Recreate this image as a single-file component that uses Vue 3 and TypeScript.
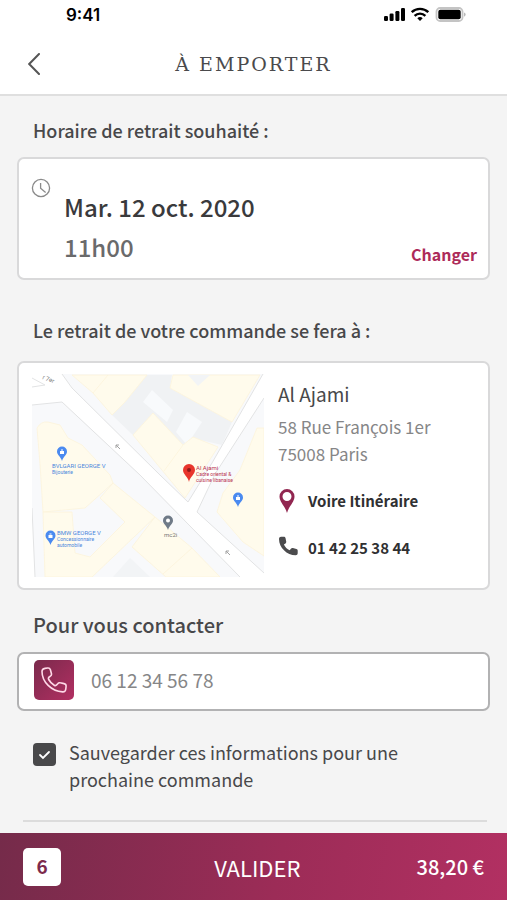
<script setup lang="ts">
import { ref } from 'vue'

interface Place {
  name: string
  street: string
  city: string
  phone: string
}

const place: Place = {
  name: 'Al Ajami',
  street: '58 Rue François 1er',
  city: '75008 Paris',
  phone: '01 42 25 38 44',
}
const pickup = { day: 'Mar. 12 oct. 2020', hour: '11h00' }
const phone = ref<string>('')
const save = ref<boolean>(true)
const cart = { count: 6, total: '38,20 €' }
</script>

<template>
  <div class="screen">
    <div class="status">
      <span class="time">9:41</span>
      <svg class="indicators" viewBox="0 0 84 16" aria-hidden="true">
        <g fill="#000">
          <rect x="1" y="9" width="4" height="5" rx="1.2" />
          <rect x="6.600" y="6.600" width="4" height="7.400" rx="1.200" />
          <rect x="12.400" y="4" width="4" height="10" rx="1.200" />
          <rect x="18" y="1" width="4" height="13" rx="1.200" />
          <path d="M37 14 34.300 11.200a4 4 0 0 1 5.400 0z" />
        </g>
        <g fill="none" stroke="#000" stroke-width="2.400">
          <path d="M28.700 5.200a12 12 0 0 1 16.600 0" />
          <path d="M31.600 8.800a7.800 7.800 0 0 1 10.800 0" />
        </g>
        <rect x="53.500" y="1" width="26" height="13" rx="3.600" fill="#fff" stroke="#c4c4c4" stroke-width="1.800" />
        <rect x="55.300" y="2.800" width="22.400" height="9.400" rx="2" fill="#000" />
        <path d="M81.200 5.600v4.200c1.800-.7 1.800-3.500 0-4.200z" fill="#aaa" />
      </svg>
    </div>

    <header class="topbar">
      <button class="back" type="button" aria-label="Retour">
        <svg viewBox="0 0 12 22"><path d="M11 1 1.200 11 11 21" /></svg>
      </button>
      <h1>À EMPORTER</h1>
    </header>

    <main>
      <section>
        <h2 class="tight">Horaire de retrait souhaité :</h2>
        <div class="card schedule">
          <svg class="clock" viewBox="0 0 20 20" aria-hidden="true">
            <circle cx="10" cy="10" r="8.600" />
            <path d="M9.600 5v5.200l5 4.400" />
          </svg>
          <div class="slot">
            <p class="day">{{ pickup.day }}</p>
            <p class="hour">{{ pickup.hour }}</p>
          </div>
          <button class="change" type="button">Changer</button>
        </div>
      </section>

      <section class="where">
        <h2 class="tight">Le retrait de votre commande se fera à :</h2>
        <div class="card place">
          <svg class="map" viewBox="0 0 232 203" role="img" aria-label="Plan du quartier">
            <rect width="232" height="203" fill="#fff" />
            <g fill="#f8f9fb">
              <path d="M30 0 40 14 128 101 156 128 180 89 231 0z" />
              <path d="M0 31 30 28 108 101 208 203H3L0 134z" />
              <path d="M232 24 183 100 165 138 232 199z" />
            </g>
            <g fill="none" stroke="#e2e3e4">
              <path d="M30 0 40 14 128 101 156 128 180 89 231 0" />
              <path d="M0 31 30 28 108 101 208 203" />
              <path d="M0 134 3 203" />
              <path d="M232 24 183 100 165 138 232 199" />
              <path d="M0 4 13 11 0 13" />
            </g>
            <path d="M115 1H140L138 14 200 48 190 71 160 64 151 71 121 39 101 61 80 41 93 28z" fill="#f0f2f4" />
            <g fill="#f8fafc">
              <path d="M120 16 141 36 135 48 111 28z" />
              <path d="M155 38 170 48 155 71 144 58z" />
            </g>
            <g fill="#fffbec" stroke="#fcf4db" stroke-width=".8">
              <path d="M40 1H115L93 28 80 41 61 19z" />
              <path d="M61 19 76 1" />
              <path d="M141 1H228L200 48 138 14z" />
              <path d="M121 39 151 71 161 63 186 73 153 124 101 61z" />
              <path d="M151 71 132 97" />
              <path d="M5 54Q9 47 16 48L28 51 36 64 50 71 78 101 81 109 53 134 11 138 8 90z" />
              <path d="M11 138H40L43 179 58 183 93 148 68 124 81 109 123 143 60 203H13z" />
              <path d="M123 143 160 174 188 203H134L100 173z" />
              <path d="M131 200 160 174" />
              <path d="M232 54H225L208 96 191 119 185 138 211 168 232 182z" />
            </g>
            <g fill="#f2f4f6">
              <path d="M156 1H178L166 12z" />
              <path d="M81 203 98 184 118 203z" />
            </g>
            <g stroke="#a2a2a2" fill="none">
              <path d="M84 71 88 75M84 71V74M84 71H87" />
              <path d="M194 177 198 181M194 177V180M194 177H197" />
            </g>
            <text class="road name" transform="translate(10 5) rotate(20)">r 7er</text>
            <g fill="#4a8af0">
              <path d="M30 87c-1.500-5-5-6-5-9.500a5 5 0 0 1 10 0c0 3.500-3.500 4.500-5 9.500z" />
              <path d="M18.500 171c-1.500-5-5-6-5-9.500a5 5 0 0 1 10 0c0 3.500-3.500 4.500-5 9.500z" />
              <path d="M206 133c-1.500-5-5-6-5-9.500a5 5 0 0 1 10 0c0 3.500-3.500 4.500-5 9.500z" />
            </g>
            <g fill="#fff">
              <path d="M28 77h4v3h-4zM29 75.500h2v1h-2z" />
              <path d="M16.500 161h4v3h-4zM17.500 159.500h2v1h-2z" />
              <path d="M204 123h4v3h-4zM205 121.500h2v1h-2z" />
            </g>
            <path d="M136 156c-1.500-5-5-6-5-9.500a5 5 0 0 1 10 0c0 3.500-3.500 4.500-5 9.500z" fill="#6f7a87" />
            <circle cx="136" cy="146.500" r="2" fill="#fff" />
            <path d="M157 108c-1-5.500-6-7.500-6-12a6 6 0 0 1 12 0c0 4.500-5 6.500-6 12z" fill="#e8352c" />
            <circle cx="157" cy="96" r="2" fill="#8f1a1a" />
            <g class="blue">
              <text class="name" x="20" y="94">BVLGARI GEORGE V</text>
              <text x="20" y="100">Bijouterie</text>
              <text class="name" x="25" y="161">BMW GEORGE V</text>
              <text x="25" y="167">Concessionnaire</text>
              <text x="25" y="173">automobile</text>
            </g>
            <g class="red">
              <text class="name" x="164" y="96">Al Ajami</text>
              <text x="164" y="102">Cadre oriental &amp;</text>
              <text x="164" y="108">cuisine libanaise</text>
            </g>
            <text class="name grey" x="132" y="163">mc2i</text>
          </svg>
          <div class="details">
            <h3>{{ place.name }}</h3>
            <address>{{ place.street }}<br />{{ place.city }}</address>
            <a class="action" href="#itineraire">
              <svg viewBox="0 0 20 26" aria-hidden="true">
                <path fill="#912650" fill-rule="evenodd" d="M9 25C7 18 1.500 14 1.500 8.500a7.500 7.500 0 0 1 15 0C16.500 14 11 18 9 25zM9 4a4.500 4.500 0 1 0 0 9 4.500 4.500 0 0 0 0-9z" />
              </svg>
              Voire Itinéraire
            </a>
            <a class="action" href="tel:0142253844">
              <svg viewBox="0 0 20 26" aria-hidden="true">
                <path fill="#4b4b4d" d="M1 4C1 2.500 2 1.800 3 1.800h2.700c.9 0 1.600.5 1.800 1.300l.7 3.500c.2.800-.1 1.400-.7 1.800L5.900 9.600c1.200 2.600 3.200 4.500 5.800 5.700l1.400-1.700c.5-.5 1.100-.7 1.800-.5l3.500.9c.8.200 1.300.8 1.300 1.700v2.600c0 1.200-.9 2-2 2C8.900 20.300 1 12.500 1 4z" />
              </svg>
              {{ place.phone }}
            </a>
          </div>
        </div>
      </section>

      <section class="contact">
        <h2><label for="phone">Pour vous contacter</label></h2>
        <div class="card field">
          <span class="badge">
            <svg viewBox="0 0 26 26" aria-hidden="true">
              <path d="M1 4.500C1 2.500 2 1.800 4 1.400L6.500 1C8 .8 9 1.400 9.400 2.800l1 3.700c.3 1.200 0 2-1 2.600l-1.200.9c-.9.700-1 1.500-.5 2.500 1.300 2.400 3 4.300 5.500 5.700 1 .6 1.900.5 2.600-.4l.9-1.100c.7-.9 1.500-1.200 2.600-.9l3.700.8c1.500.3 2.200 1.200 2.100 2.700l-.3 2.700c-.2 2-1.200 3-3.200 2.900C10.500 24.300 1 15 1 4.500z" />
            </svg>
          </span>
          <input id="phone" v-model="phone" type="tel" placeholder="06 12 34 56 78" />
        </div>
        <label class="save">
          <input v-model="save" type="checkbox" />
          <span>Sauvegarder ces informations pour une prochaine commande</span>
        </label>
      </section>
      <hr />
    </main>

    <footer>
      <span class="count">{{ cart.count }}</span>
      <button class="submit" type="button">VALIDER</button>
      <span class="total">{{ cart.total }}</span>
    </footer>
  </div>
</template>

<style>
body {
  margin: 0;
  background: #f4f4f4;
}
</style>

<style scoped>
.screen {
  display: flex;
  flex-direction: column;
  min-height: 100vh;
  background: #f4f4f4;
  color: #48484a;
  font-family: "Noto Sans CJK SC", "Noto Sans", sans-serif;
}
h1, h2, h3, p, address {
  margin: 0;
  font-style: normal;
}
button {
  padding: 0;
  border: 0;
  background: none;
  font-family: inherit;
  cursor: pointer;
}
.status {
  display: flex;
  justify-content: space-between;
  align-items: center;
  height: 30px;
  padding: 0 40px 0 66px;
  background: #fff;
}
.time {
  color: #000;
  font: 600 17px/30px Inter, sans-serif;
}
.indicators {
  width: 84px;
  height: 16px;
}
.topbar {
  display: grid;
  grid-template-columns: 28px 1fr 28px;
  align-items: center;
  height: 66px;
  padding: 4px 28px 0;
  box-sizing: border-box;
  border-bottom: 2px solid #dfdfdf;
  background: #fff;
}
.back svg {
  display: block;
  width: 12px;
  height: 22px;
  fill: none;
  stroke: #555;
  stroke-width: 2;
  stroke-linecap: round;
}
h1 {
  color: #4a4a4c;
  font: 400 19px/32px "DejaVu Serif", serif;
  letter-spacing: 2px;
  text-align: center;
}
main {
  flex: 1;
  padding: 19px 17px 10px;
}
h2 {
  padding-left: 16px;
  font-size: 20px;
  font-weight: 500;
  line-height: 30px;
}
.tight {
  font-size: 18px;
}
.card {
  box-sizing: border-box;
  margin-top: 12px;
  border: 2px solid #d9d9da;
  border-radius: 7px;
  background: #fff;
}
.schedule {
  display: flex;
  min-height: 123px;
  padding: 19px 11px 10px 12px;
}
.clock {
  width: 20px;
  height: 20px;
  fill: none;
  stroke: #8a8a8a;
  stroke-width: 1.3;
}
.slot {
  flex: 1;
  padding: 9px 0 0 13px;
  line-height: 40px;
}
.day {
  color: #3a3a3c;
  font-size: 24px;
  font-weight: 500;
}
.hour {
  color: #6a6a6b;
  font-size: 24px;
  font-weight: 500;
}
.change {
  align-self: flex-end;
  color: #ad2b5a;
  font-size: 16px;
  font-weight: 700;
  line-height: 28px;
}
.where {
  margin-top: 35px;
}
.where .card {
  margin-top: 16px;
}
.place {
  display: flex;
  gap: 14px;
  min-height: 229px;
  padding: 11px 13px;
}
.map {
  flex: 0 1 232px;
  width: 232px;
  height: 203px;
}
.map text {
  font: 5px Roboto, sans-serif;
}
.map .name {
  font-size: 6px;
}
.blue {
  fill: #4a86dc;
}
.red {
  fill: #b8324f;
}
.grey,
.road {
  fill: #777;
}
.details {
  flex: 1;
  min-width: 160px;
}
h3 {
  font-size: 19px;
  font-weight: 400;
  line-height: 39px;
}
address {
  margin-bottom: 10px;
  color: #868687;
  font-size: 17px;
  line-height: 27px;
}
.action {
  display: flex;
  align-items: center;
  gap: 10px;
  color: #303032;
  font-size: 15px;
  font-weight: 700;
  line-height: 47px;
  text-decoration: none;
}
.action svg {
  width: 20px;
  height: 26px;
}
.contact {
  margin-top: 20px;
}
.field {
  display: flex;
  align-items: center;
  gap: 17px;
  min-height: 59px;
  padding: 0 15px 3px;
  border-color: #b2b2b3;
}
.badge {
  display: grid;
  place-items: center;
  width: 40px;
  height: 40px;
  border-radius: 5px;
  background: linear-gradient(135deg, #7a2a4c, #b22f62);
}
.badge svg {
  width: 26px;
  height: 26px;
  fill: none;
  stroke: #ffd9e8;
  stroke-width: 1.6;
}
.field input {
  flex: 1;
  min-width: 0;
  padding: 0;
  border: 0;
  outline: 0;
  background: none;
  color: #48484a;
  font: 400 19px/30px "Noto Sans CJK SC", sans-serif;
}
.field input::placeholder {
  color: #868687;
  opacity: 1;
}
.save {
  display: flex;
  gap: 13px;
  margin-top: 28px;
  padding: 0 80px 0 16px;
  font-size: 18px;
  line-height: 27px;
}
.save input {
  flex: none;
  width: 23px;
  height: 23px;
  margin: 4px 0 0;
  border-radius: 4px;
  appearance: none;
  background: #fff;
  border: 2px solid #48484a;
}
.save input:checked {
  border: 0;
  background: #48484a url("data:image/svg+xml,%3Csvg xmlns='http://www.w3.org/2000/svg' viewBox='0 0 23 23'%3E%3Cpath d='M7 12l3 3 6-6' fill='none' stroke='white' stroke-width='1.800' stroke-linecap='round'/%3E%3C/svg%3E");
}
hr {
  height: 2px;
  margin: 27px 3px 0 6px;
  border: 0;
  background: #dcdcdc;
}
footer {
  display: grid;
  grid-template-columns: 25fr auto 24fr;
  align-items: center;
  height: 67px;
  padding: 0 23px;
  background: linear-gradient(100deg, #752b4a, #9c2c57 55%, #b23062);
  color: #fff;
}
.count {
  width: 38px;
  height: 38px;
  border-radius: 5px;
  background: #fff;
  color: #7d2a4c;
  font-size: 19px;
  font-weight: 700;
  line-height: 36px;
  text-align: center;
}
.submit {
  color: #fff;
  font-size: 22px;
  line-height: 40px;
}
.total {
  font-size: 20px;
  font-weight: 500;
  text-align: right;
}
</style>
